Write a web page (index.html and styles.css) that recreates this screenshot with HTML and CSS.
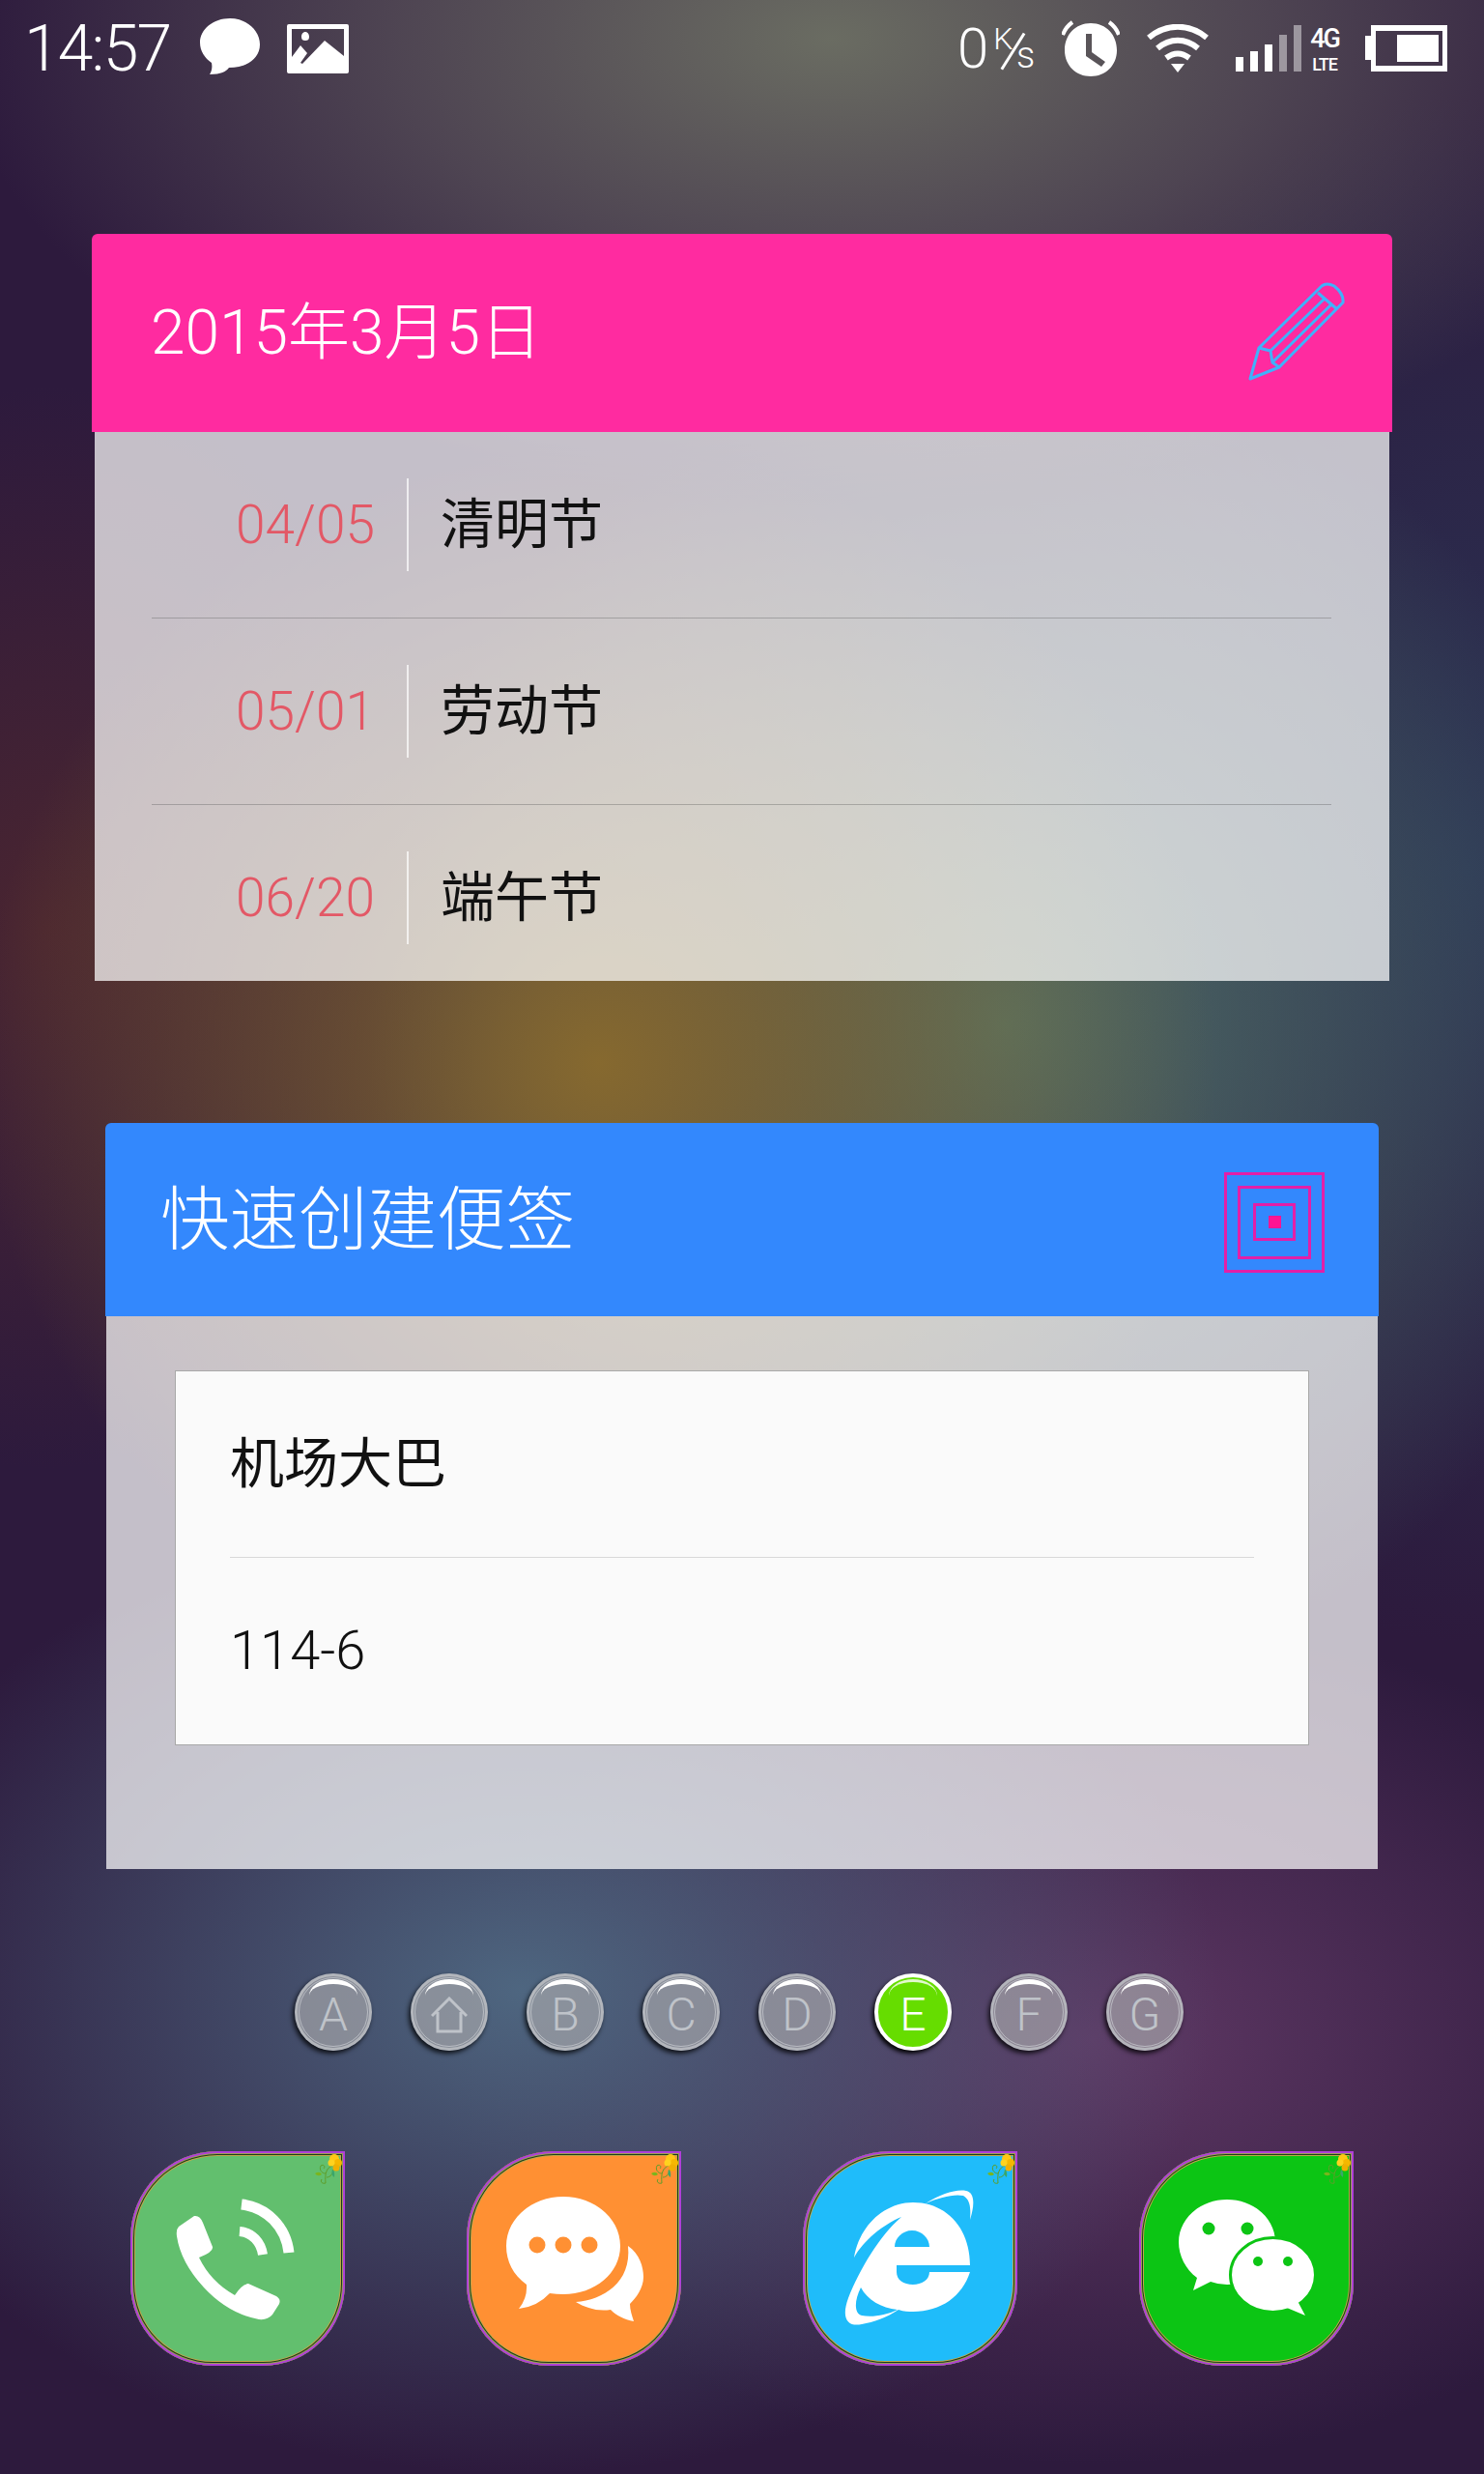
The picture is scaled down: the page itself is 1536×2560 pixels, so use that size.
FILE: index.html
```html
<!DOCTYPE html>
<html lang="zh-CN">
<head>
	<meta charset="UTF-8">
	<title>桌面</title>
	<link rel="stylesheet" href="styles.css">
</head>
<body>
<div class="screen">
	<!-- 状态栏 -->
	<div class="status">
		<div class="status-left">
			<span class="time">14:57</span>
			<svg class="ic-bubble" viewBox="0 0 62 58"><path fill="#fff" d="M31 0C48 0 62 12 62 27C62 42 48 51 30 51C27 55 22 58 10 58C12 55 13 51 12 46C5 41 0 34 0 25C0 11 14 0 31 0Z"/></svg>
			<svg class="ic-image" viewBox="0 0 64 51"><path fill="#fff" fill-rule="evenodd" d="M2 0H62Q64 0 64 2V49Q64 51 62 51H2Q0 51 0 49V2Q0 0 2 0ZM5 5V34L14 22L21 30L14 40L16 41L39 17L59 33V5ZM19 8C21.500 8 23 10.500 23 13C23 16 21.500 17 19 17C16.500 17 15 16 15 13C15 10.500 16.500 8 19 8Z"/></svg>
		</div>
		<div class="status-right">
			<div class="speed">
				<span class="speed-num">0</span>
				<span class="speed-k">K</span>
				<i class="speed-slash"></i>
				<span class="speed-s">s</span>
			</div>
			<svg class="ic-alarm" viewBox="0 0 60 58"><path fill="#fff" fill-rule="evenodd" d="M30 3C46 3 57 15 57 31C57 47 45 58 30 58C15 58 3 47 3 31C3 15 14 3 30 3ZM25 14V37L41 48L45 43L31 33V14Z"/><path fill="none" stroke="#fff" stroke-width="4" d="M1 14Q4 6 11 1M59 14Q56 6 49 1" transform="translate(0 1)"/></svg>
			<svg class="ic-wifi" viewBox="0 0 64 50"><path fill="none" stroke="#fff" stroke-width="6" d="M2 14C20 -1 44 -1 62 14M11 25C24 14 40 14 53 25M20 35C28 29 36 29 44 35"/><path fill="#fff" d="M25 41H39L32 50Z"/></svg>
			<div class="signal">
				<i class="b1"></i><i class="b2"></i><i class="b3"></i><i class="b4 off"></i><i class="b5 off"></i>
			</div>
			<div class="net"><span class="net-4g">4G</span><span class="net-lte">LTE</span></div>
			<svg class="ic-batt" viewBox="0 0 85 48"><path fill="#fff" fill-rule="evenodd" d="M6 0H85V48H6V36H0V11H6ZM11 6V42H80V6Z"/><rect fill="#fff" x="33" y="10" width="43" height="28"/></svg>
		</div>
	</div>

	<!-- 日历卡片 -->
	<div class="card card-date">
		<div class="card-head head-pink">
			<span class="date-title">2015年3月5日</span>
			<svg class="ic-pencil" viewBox="-2 -2 102 104" fill="none" stroke="#3fb2fb" stroke-width="3" stroke-linejoin="round"><path d="M1 99L10 67L75 3Q80 -1 88 3Q98 11 97 20L31 87Z"/><path d="M71 10L91 27M10 67L22 70L24 82L31 87M22 70L78 16M24 82L84 23"/></svg>
		</div>
		<div class="card-body">
			<div class="row">
				<span class="row-date">04/05</span><i class="row-sep"></i><span class="row-name">清明节</span>
			</div>
			<div class="row">
				<span class="row-date">05/01</span><i class="row-sep"></i><span class="row-name">劳动节</span>
			</div>
			<div class="row row-last">
				<span class="row-date">06/20</span><i class="row-sep"></i><span class="row-name">端午节</span>
			</div>
		</div>
	</div>

	<!-- 便签卡片 -->
	<div class="card card-note">
		<div class="card-head head-blue">
			<span class="note-title">快速创建便签</span>
			<div class="sq sq1"><div class="sq sq2"><div class="sq sq3"><div class="sq4"></div></div></div></div>
		</div>
		<div class="note-body">
			<div class="note-box">
				<div class="note-line">机场大巴</div>
				<div class="note-line note-num">114-6</div>
			</div>
		</div>
	</div>

	<!-- 分屏指示 -->
	<div class="pager">
		<div class="dot">A</div>
		<div class="dot"><svg class="ic-home" viewBox="0 0 38 38" fill="none" stroke="#bfc3c9" stroke-width="3"><path d="M1 20L19 2L37 20M7 16V36H31V16"/></svg></div>
		<div class="dot">B</div>
		<div class="dot">C</div>
		<div class="dot">D</div>
		<div class="dot dot-on">E</div>
		<div class="dot">F</div>
		<div class="dot">G</div>
	</div>

	<!-- 底部图标 -->
	<div class="dock">
		<div class="tile tile-phone">
			<svg viewBox="0 0 220 221">
				<path fill="#fff" d="M65 67Q71 66 74 74L84 99Q85 104 70 110Q82 135 107 149Q114 138 121 137L150 150Q155 153 153 158L146 169Q141 175 132 174Q100 168 75 141Q51 115 47 88Q46 81 49 78Z"/>
				<path fill="none" stroke="#fff" stroke-width="11" d="M114 55C140 58 160 78 163 105"/>
				<path fill="none" stroke="#fff" stroke-width="10" d="M112 83C125 84 134 94 136 107"/>
			</svg>
			<svg class="flower" viewBox="0 0 30 32"><use href="#flw"/></svg>
		</div>
		<div class="tile tile-msg">
			<svg viewBox="0 0 220 221">
				<path fill="#fff" d="M99 47C132 47 158 70 158 98C158 126 132 148 99 148Q92 148 85 147Q72 161 53 163Q62 152 61 138C47 128 40 114 40 98C40 70 66 47 99 47Z"/>
				<circle fill="#ff9033" cx="72" cy="97" r="8.500"/><circle fill="#ff9033" cx="99" cy="97" r="8.500"/><circle fill="#ff9033" cx="126" cy="97" r="8.500"/>
				<path fill="#fff" d="M166 98C178 106 182 120 182 130C182 142 174 152 168 158C168 164 170 170 172 176C162 174 154 170 148 164C134 166 122 162 112 156C140 154 170 136 166 98Z"/>
			</svg>
			<svg class="flower" viewBox="0 0 30 32"><use href="#flw"/></svg>
		</div>
		<div class="tile tile-ie">
			<svg viewBox="0 0 220 221">
				<path fill="#fff" fill-rule="evenodd" d="M172 118C172 80 148 53 113 53C85 53 58 75 52 110C62 92 82 76 101 68C78 88 58 122 46 152C38 174 46 182 60 179C72 177 86 172 98 164C104 166 108 166 113 166C142 166 164 150 172 125H130C130 133 122 138 113 138C103 138 96 133 96 125V118ZM94 99H130C130 90 122 82 112 82C102 82 94 90 94 99ZM59 141C52 155 52 168 60 170C70 172 85 170 97 164C80 162 66 154 59 141Z"/>
				<path fill="#fff" d="M126 54C142 44 158 39 168 41C177 43 177 55 172 71C173 58 172 50 165 46C155 44 140 48 126 54Z"/>
			</svg>
			<svg class="flower" viewBox="0 0 30 32"><use href="#flw"/></svg>
		</div>
		<div class="tile tile-wx">
			<svg viewBox="0 0 220 221">
				<path fill="#fff" d="M90 50C118 50 140 70 140 94C140 118 118 138 90 138Q81 138 73 135L55 144L59 131C47 122 40 108 40 94C40 70 62 50 90 50Z"/>
				<circle fill="#0cc514" cx="71" cy="80" r="6.500"/><circle fill="#0cc514" cx="111" cy="80" r="6.500"/>
				<ellipse fill="#fff" stroke="#0cc514" stroke-width="3" cx="137.500" cy="128" rx="44" ry="38.500"/>
				<path fill="#fff" d="M163 155L171 170L152 162Z"/>
				<circle fill="#0cc514" cx="122" cy="114" r="5"/><circle fill="#0cc514" cx="153" cy="114" r="5"/>
			</svg>
			<svg class="flower" viewBox="0 0 30 32"><use href="#flw"/></svg>
		</div>
	</div>
</div>

<!-- 角标花饰 -->
<svg class="defs" width="0" height="0">
	<defs>
		<g id="flw">
			<path fill="none" stroke="#5f9e2a" stroke-width="1" d="M20 12C14 14 12 20 13 30C10 31 7 29 9 26M13 20C9 20 6 16 8 12C11 10 13 13 11 15M14 24C18 24 21 20 21 16"/>
			<path fill="#7ab51d" d="M2 20Q7 17 9 21Q5 24 2 20Z"/>
			<path fill="#3aa66b" d="M20 16Q23 18 22 24Q18 21 20 16Z"/>
			<circle fill="#ffc814" cx="22" cy="5" r="5"/>
			<circle fill="#f5b800" cx="26" cy="9" r="4"/>
			<circle fill="#ffd21e" cx="19" cy="9" r="3.500"/>
			<circle fill="#f0b000" cx="24" cy="14" r="3.500"/>
		</g>
	</defs>
</svg>
</body>
</html>
```

FILE: styles.css
```css
body {
	margin: 0;
	padding: 0;
}

.screen {
	width: 1536px;
	height: 2560px;
	overflow: hidden;
	font-family: Roboto, "Noto Sans CJK SC", sans-serif;
	background-color: #2d1a3d;
	background-image:
		radial-gradient(ellipse 900px 480px at 860px 40px, #6a6c62 0%, rgba(106, 104, 100, 0.55) 50%, rgba(106, 90, 100, 0) 100%),
		radial-gradient(ellipse 640px 640px at 620px 1100px, #86692f 0%, rgba(134, 105, 47, 0.5) 50%, rgba(134, 105, 47, 0) 100%),
		radial-gradient(ellipse 660px 700px at 1040px 1060px, #4f7068 0%, rgba(79, 112, 104, 0.5) 50%, rgba(79, 112, 104, 0) 100%),
		radial-gradient(ellipse 420px 560px at 50px 960px, #4a2530 0%, rgba(74, 37, 48, 0) 100%),
		radial-gradient(ellipse 520px 800px at 1520px 900px, #2a3354 0%, rgba(42, 51, 84, 0) 100%),
		radial-gradient(ellipse 720px 500px at 540px 2060px, #4e6680 0%, rgba(78, 102, 128, 0.5) 50%, rgba(78, 102, 128, 0) 100%),
		radial-gradient(ellipse 680px 440px at 1130px 2110px, #5f3864 0%, rgba(95, 56, 100, 0.5) 50%, rgba(95, 56, 100, 0) 100%);
}

.defs {
	display: block;
}

/* 状态栏 */
.status {
	height: 100px;
	padding: 0 38px 0 25px;
	display: flex;
	justify-content: space-between;
	align-items: center;
	color: #fff;
}

.status-left, .status-right {
	display: flex;
	align-items: center;
}

.time {
	width: 182px;
	font-size: 66px;
	font-weight: 300;
	letter-spacing: -1.800px;
}

.ic-bubble {
	width: 62px;
	height: 58px;
	margin-top: -4px;
}

.ic-image {
	width: 64px;
	height: 51px;
	margin-left: 28px;
}

.speed {
	width: 84px;
	height: 50px;
	display: flex;
	align-items: flex-start;
	font-weight: 300;
}

.speed-num {
	font-size: 58px;
	line-height: 50px;
}

.speed-k {
	font-size: 32px;
	line-height: 30px;
	margin-left: 5px;
}

.speed-slash {
	display: block;
	width: 2.500px;
	height: 44px;
	margin: 6px 0 0 -1px;
	background-color: #fff;
	transform: rotate(32deg);
}

.speed-s {
	font-size: 38px;
	line-height: 36px;
	margin: 14px 0 0 2px;
}

.ic-alarm {
	width: 60px;
	height: 58px;
	margin-left: 24px;
}

.ic-wifi {
	width: 64px;
	height: 50px;
	margin-left: 28px;
}

.signal {
	height: 48px;
	display: flex;
	align-items: flex-end;
	gap: 7px;
	margin-left: 28px;
}

.signal i {
	display: block;
	width: 8px;
	background-color: #fff;
}

.signal .b1 { height: 15px; }
.signal .b2 { height: 21px; }
.signal .b3 { height: 28px; }
.signal .b4 { height: 38px; }
.signal .b5 { height: 48px; }

.signal .off {
	opacity: 0.45;
}

.net {
	width: 30px;
	margin-left: 9px;
	display: flex;
	flex-direction: column;
	align-items: center;
	font-weight: 500;
}

.net-4g {
	font-size: 27px;
	line-height: 32px;
	letter-spacing: -2px;
}

.net-lte {
	font-size: 18px;
	line-height: 21px;
	letter-spacing: -1px;
}

.ic-batt {
	width: 85px;
	height: 48px;
	margin-left: 27px;
}

/* 卡片 */
.card-date {
	margin: 142px 95px 0;
}

.card-note {
	margin: 147px 109px 0;
}

.card-head {
	display: flex;
	justify-content: space-between;
	align-items: center;
	border-radius: 6px 6px 0 0;
	color: #fff;
}

.head-pink {
	height: 205px;
	padding: 0 48px 0 61px;
	background-color: #ff2ba0;
}

.head-blue {
	height: 200px;
	padding: 0 56px 0 57px;
	background-color: #3388fd;
}

.date-title {
	font-size: 64px;
	font-weight: 300;
	line-height: 74px;
}

.note-title {
	font-size: 71.500px;
	font-weight: 300;
	line-height: 84px;
	margin-top: 2px;
}

.ic-pencil {
	width: 102px;
	height: 104px;
	margin-top: -4px;
}

.card-body {
	height: 568px;
	margin: 0 3px;
	padding: 0 60px 0 59px;
	overflow: hidden;
	background-color: rgba(255, 255, 255, 0.72);
}

.row {
	height: 96px;
	padding: 48px 0;
	display: flex;
	align-items: center;
	border-bottom: 1px solid rgba(100, 100, 100, 0.4);
}

.row-last {
	border-bottom: 0;
}

.row-date {
	width: 231px;
	color: #e35866;
	font-size: 55px;
	font-weight: 300;
	text-align: right;
}

.row-sep {
	width: 2px;
	height: 96px;
	margin: 0 34px 0 33px;
	background-color: rgba(255, 255, 255, 0.7);
}

.row-name {
	color: #111;
	font-size: 56px;
	line-height: 70px;
	margin-left: -1px;
}

/* 同心方块 */
.sq {
	display: flex;
	align-items: center;
	justify-content: center;
	box-sizing: border-box;
	border: 3.500px solid #e31fa8;
}

.sq1 {
	width: 104px;
	height: 104px;
	margin-top: 5px;
}

.sq2 {
	width: 76px;
	height: 76px;
}

.sq3 {
	width: 44px;
	height: 39px;
}

.sq4 {
	width: 13px;
	height: 13px;
	background-color: #ff1493;
}

.note-body {
	height: 516px;
	margin: 0 1px;
	padding: 56px 71px 0 71px;
	background-color: rgba(255, 255, 255, 0.72);
}

.note-box {
	height: 386px;
	padding: 0 56px;
	border: 1px solid #a8a8a8;
	background-color: #fafafa;
}

.note-line {
	height: 192px;
	line-height: 192px;
	color: #111;
	font-size: 56px;
	border-bottom: 1px solid #d8d8d8;
}

.note-num {
	border-bottom: 0;
	font-weight: 300;
}

/* 分屏指示 */
.pager {
	margin: 108px 0 0 305px;
	display: flex;
	gap: 40px;
}

.dot {
	position: relative;
	box-sizing: border-box;
	width: 80px;
	height: 80px;
	display: flex;
	align-items: center;
	justify-content: center;
	border-radius: 50%;
	border: 3px solid rgba(190, 192, 196, 0.8);
	outline: 1px solid rgba(205, 208, 212, 0.7);
	outline-offset: -5px;
	background-color: rgba(168, 168, 172, 0.67);
	box-shadow: -2px 3px 5px rgba(0, 0, 0, 0.8);
	color: #bfc3c9;
	font-size: 48px;
	font-weight: 300;
	line-height: 1;
	padding-top: 6px;
}

.dot:before {
	content: '';
	position: absolute;
	top: 3px;
	left: 12px;
	width: 50px;
	height: 34px;
	border-top: 5px solid #fff;
	border-radius: 50%;
	box-sizing: border-box;
}

.dot-on {
	border: 4px solid #fff;
	outline: 0;
	background-color: #66dd00;
	box-shadow: -2px 3px 4px rgba(0, 0, 0, 0.95);
	color: #fff;
}

.dot-on:before {
	top: 2px;
	left: 11px;
	border-top-width: 3px;
	opacity: 0.8;
}

.ic-home {
	width: 38px;
	height: 38px;
}

/* 底部图标 */
.dock {
	margin: 104px 0 0 135px;
	display: flex;
	gap: 126px;
}

.tile {
	position: relative;
	width: 222px;
	height: 222px;
	border-radius: 90px 0 85px 85px;
	box-shadow:
		inset 0 0 0 2px #b040d8,
		inset 0 0 0 3px #9aa050,
		inset 0 0 0 4px #1c3a1c,
		inset 0 0 0 5px #c0a848;
}

.tile svg {
	display: block;
	width: 220px;
	height: 221px;
	padding-left: 1px;
}

.tile .flower {
	position: absolute;
	top: 3px;
	right: 3px;
	width: 30px;
	height: 32px;
	padding: 0;
}

.tile-phone { background-color: #62bf6e; }
.tile-msg { background-color: #ff9033; }
.tile-ie { background-color: #1fbcfa; }
.tile-wx { background-color: #0cc514; }
```
